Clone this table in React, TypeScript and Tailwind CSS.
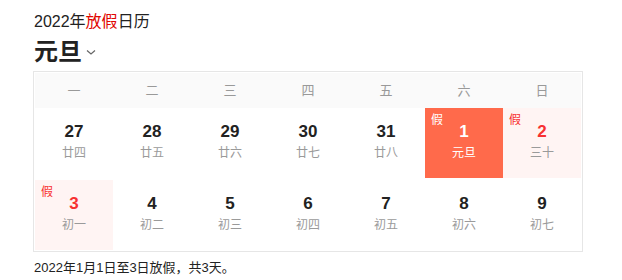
import React from "react";

type Cell = { d: string; l: string; kind?: "main" | "hol" };

const rows: Cell[][] = [
  [
    { d: "27", l: "廿四" },
    { d: "28", l: "廿五" },
    { d: "29", l: "廿六" },
    { d: "30", l: "廿七" },
    { d: "31", l: "廿八" },
    { d: "1", l: "元旦", kind: "main" },
    { d: "2", l: "三十", kind: "hol" },
  ],
  [
    { d: "3", l: "初一", kind: "hol" },
    { d: "4", l: "初二" },
    { d: "5", l: "初三" },
    { d: "6", l: "初四" },
    { d: "7", l: "初五" },
    { d: "8", l: "初六" },
    { d: "9", l: "初七" },
  ],
];

const weeks = ["一", "二", "三", "四", "五", "六", "日"];

function DayCell({ c }: { c: Cell }) {
  const bg =
    c.kind === "main" ? "bg-[#ff6a4b]" : c.kind === "hol" ? "bg-[#fff4f3]" : "bg-white";
  const num =
    c.kind === "main" ? "text-white" : c.kind === "hol" ? "text-[#f73131]" : "text-[#222]";
  const lunar = c.kind === "main" ? "text-white" : "text-[#9a9a9a]";
  return (
    <div className={`relative h-[70px] w-[78px] flex flex-col items-center pt-[14px] ${bg}`}>
      {c.kind && (
        <span
          className={`absolute left-[6px] top-[4px] text-[12px] leading-[16px] ${
            c.kind === "main" ? "text-white" : "text-[#f73131]"
          }`}
        >
          假
        </span>
      )}
      <div className={`text-[17px] font-bold leading-[20px] ${num}`}>{c.d}</div>
      <div className={`mt-[2px] text-[12px] leading-[18px] ${lunar}`}>{c.l}</div>
    </div>
  );
}

export default function App() {
  return (
    <div
      className="w-[622px] h-[280px] bg-white pl-[33px] pt-[12px] text-[#333]"
      style={{ fontFamily: '"Liberation Sans", Arial, "Noto Sans CJK SC", sans-serif' }}
    >
      <div className="pl-px text-[16px] leading-[20px] text-[#222]">
        2022年<span className="text-[#e10601]">放假</span>日历
      </div>
      <div className="mt-[6px] flex items-center pl-px">
        <span className="text-[24px] font-bold leading-[28px] text-[#222]">元旦</span>
        <svg width="10" height="7" viewBox="0 0 10 7" className="ml-[4px] mt-[1px]">
          <path d="M1 1.5 L5 5 L9 1.5" fill="none" stroke="#666" strokeWidth="1.2" />
        </svg>
      </div>
      <div className="mt-[5px] w-[550px] border border-[#e6e6e6] p-px">
        <div className="flex h-[35px] bg-[#fafafa]">
          {weeks.map((w) => (
            <div
              key={w}
              className="w-[78px] flex items-center justify-center text-[13px] text-[#999]"
            >
              {w}
            </div>
          ))}
        </div>
        <div className="flex flex-col gap-[2px]">
          {rows.map((r, i) => (
            <div key={i} className="flex">
              {r.map((c) => (
                <DayCell key={c.d} c={c} />
              ))}
            </div>
          ))}
        </div>
      </div>
      <div className="mt-[7px] pl-px text-[13px] leading-[18px] text-[#222]">
        2022年1月1日至3日放假，共3天。
      </div>
    </div>
  );
}
